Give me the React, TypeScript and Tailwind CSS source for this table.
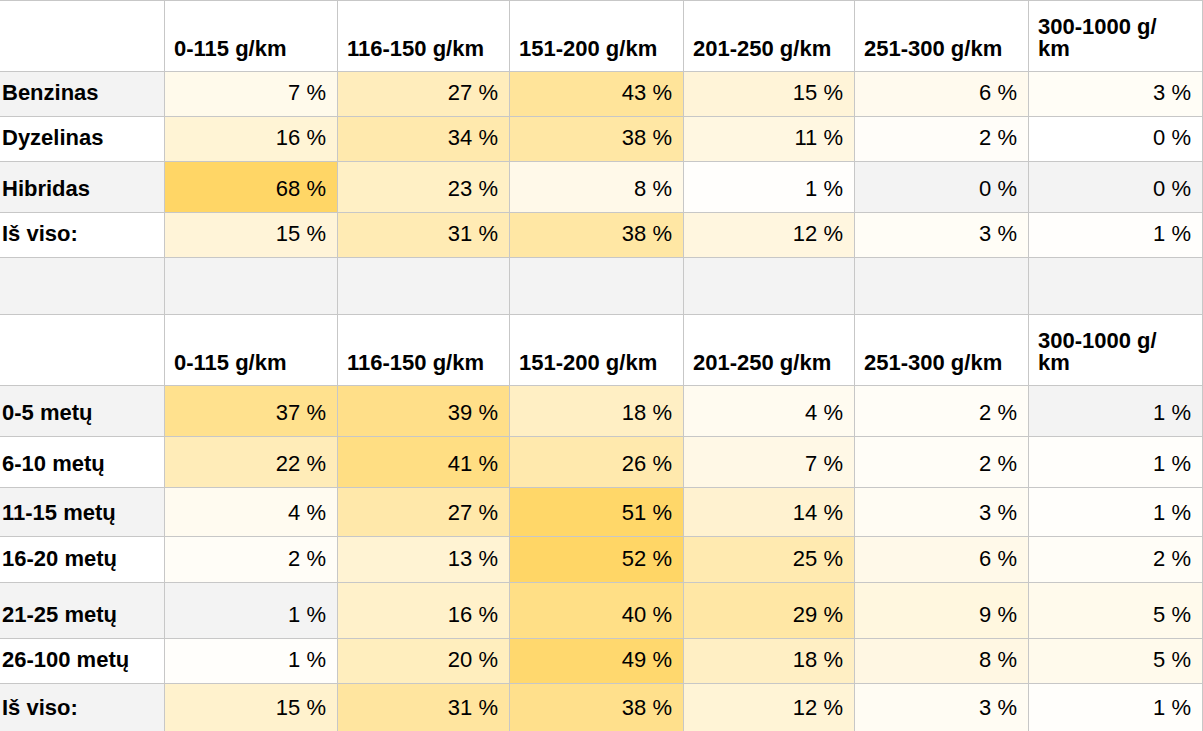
import React from 'react';

const STRIPE = '#f3f3f3';

const headers = ['0-115 g/km', '116-150 g/km', '151-200 g/km', '201-250 g/km', '251-300 g/km'];

type Row = {
  label: string;
  values: number[];
  h: string;
  striped: boolean;
  plain?: number[]; // cells that keep the row background
};

const fuelRows: Row[] = [
  { label: 'Benzinas', values: [7, 27, 43, 15, 6, 3], h: 'h-[45px]', striped: true },
  { label: 'Dyzelinas', values: [16, 34, 38, 11, 2, 0], h: 'h-[45px]', striped: false },
  { label: 'Hibridas', values: [68, 23, 8, 1, 0, 0], h: 'h-[51px]', striped: true, plain: [4, 5] },
  { label: 'Iš viso:', values: [15, 31, 38, 12, 3, 1], h: 'h-[45px]', striped: false },
];

const ageRows: Row[] = [
  { label: '0-5 metų', values: [37, 39, 18, 4, 2, 1], h: 'h-[51px]', striped: true, plain: [5] },
  { label: '6-10 metų', values: [22, 41, 26, 7, 2, 1], h: 'h-[51px]', striped: false },
  { label: '11-15 metų', values: [4, 27, 51, 14, 3, 1], h: 'h-[49px]', striped: true },
  { label: '16-20 metų', values: [2, 13, 52, 25, 6, 2], h: 'h-[46px]', striped: false },
  { label: '21-25 metų', values: [1, 16, 40, 29, 9, 5], h: 'h-[56px]', striped: true, plain: [0] },
  { label: '26-100 metų', values: [1, 20, 49, 18, 8, 5], h: 'h-[45px]', striped: false },
  { label: 'Iš viso:', values: [15, 31, 38, 12, 3, 1], h: 'h-[48px]', striped: true },
];

// white -> #ffd666 scale, relative to the largest value of the table
function heat(v: number, max: number) {
  const t = Math.pow(v / max, 0.9);
  const g = Math.round(255 - (255 - 214) * t);
  const b = Math.round(255 - (255 - 102) * t);
  return `rgb(255, ${g}, ${b})`;
}

const cellBase = 'flex items-end border-b border-r border-[#c7c7c7]';

function HeaderRow() {
  return (
    <div className="grid grid-cols-[165px_173px_172px_174px_171px_174px_1fr] bg-white">
      <div className={`${cellBase} h-[71px]`} />
      {headers.map((h) => (
        <div key={h} className={`${cellBase} h-[71px] pl-[9px] pb-[10px] font-bold leading-[25px]`}>
          {h}
        </div>
      ))}
      <div className={`${cellBase} h-[71px] pl-[9px] pb-[11px] font-bold leading-[22px]`}>
        <span>
          300-1000 g/
          <br />
          km
        </span>
      </div>
    </div>
  );
}

function DataRow({ row, max }: { row: Row; max: number }) {
  const rowBg = row.striped ? STRIPE : '#ffffff';
  return (
    <div className="grid grid-cols-[165px_173px_172px_174px_171px_174px_1fr]">
      <div
        className={`${cellBase} ${row.h} pl-[2px] pb-[11px] font-bold leading-[25px]`}
        style={{ backgroundColor: rowBg }}
      >
        {row.label}
      </div>
      {row.values.map((v, i) => {
        const keepRow = v === 0 || row.plain?.includes(i);
        return (
          <div
            key={i}
            className={`${cellBase} ${row.h} justify-end pr-[11px] pb-[11px] leading-[25px]`}
            style={{ backgroundColor: keepRow ? rowBg : heat(v, max) }}
          >
            {v} %
          </div>
        );
      })}
    </div>
  );
}

export default function App() {
  const fuelMax = Math.max(...fuelRows.flatMap((r) => r.values));
  const ageMax = Math.max(...ageRows.flatMap((r) => r.values));

  return (
    <div className="w-[1203px] h-[731px] overflow-hidden bg-white text-black text-[22px] font-['Liberation_Sans',Arial,sans-serif]">
      <div className="border-t border-[#c7c7c7]">
        <HeaderRow />
        {fuelRows.map((r) => (
          <DataRow key={r.label} row={r} max={fuelMax} />
        ))}
        <div className="grid grid-cols-[165px_173px_172px_174px_171px_174px_1fr] bg-[#f3f3f3]">
          {Array.from({ length: 7 }).map((_, i) => (
            <div key={i} className={`${cellBase} h-[57px]`} />
          ))}
        </div>
        <HeaderRow />
        {ageRows.map((r) => (
          <DataRow key={r.label} row={r} max={ageMax} />
        ))}
      </div>
    </div>
  );
}
